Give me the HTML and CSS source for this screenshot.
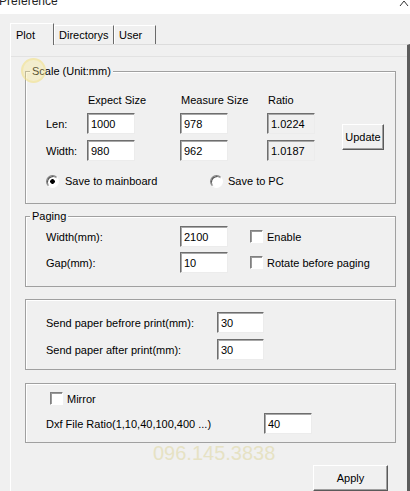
FILE: index.html
```html
<!DOCTYPE html>
<html lang="en">
<head>
    <meta charset="UTF-8">
    <meta name="viewport" content="width=device-width, initial-scale=1.0">
    <title>Preference</title>
    <link rel="stylesheet" href="styles.css">
</head>
<body>
    <!-- Title bar (cut off at the top) -->
    <div class="titlebar">
        <span class="title">Preference</span>
        <svg class="close-icon" width="10" height="6" viewBox="0 0 10 6">
            <path d="M1 6 L5 1 L9 6" fill="none" stroke="#333" stroke-width="1"/>
        </svg>
    </div>

    <!-- Tabs -->
    <div class="tabs">
        <div class="tab tab-plot active">Plot</div>
        <div class="tab tab-dir">Directorys</div>
        <div class="tab tab-user">User</div>
    </div>

    <div class="panel">
        <div class="panel-line"></div>

        <!-- Scale -->
        <div class="group scale">
            <div class="group-title">Scale (Unit:mm)</div>
            <div class="scale-grid">
                <span></span>
                <span class="col-head">Expect Size</span>
                <span class="col-head">Measure Size</span>
                <span class="col-head">Ratio</span>
                <span></span>

                <label for="lenExpect">Len:</label>
                <input class="field" id="lenExpect" type="text" value="1000">
                <input class="field" type="text" value="978">
                <input class="field readonly" type="text" value="1.0224" readonly>
                <button class="btn update-btn">Update</button>

                <label for="widthExpect">Width:</label>
                <input class="field" id="widthExpect" type="text" value="980">
                <input class="field" type="text" value="962">
                <input class="field readonly" type="text" value="1.0187" readonly>
            </div>
            <div class="save-row">
                <label class="option save-main"><input class="radio" type="radio" name="save" checked>Save to mainboard</label>
                <label class="option save-pc"><input class="radio" type="radio" name="save">Save to PC</label>
            </div>
        </div>

        <!-- Paging -->
        <div class="group paging">
            <div class="group-title">Paging</div>
            <div class="paging-grid">
                <span>Width(mm):</span>
                <input class="field" type="text" value="2100">
                <span></span>
                <label class="option"><input class="check" type="checkbox">Enable</label>

                <span>Gap(mm):</span>
                <input class="field" type="text" value="10">
                <span></span>
                <label class="option"><input class="check" type="checkbox">Rotate before paging</label>
            </div>
        </div>

        <!-- Send paper -->
        <div class="group feed">
            <div class="feed-grid">
                <span>Send paper befrore print(mm):</span>
                <input class="field" type="text" value="30">
                <span>Send paper after print(mm):</span>
                <input class="field" type="text" value="30">
            </div>
        </div>

        <!-- Mirror / Dxf -->
        <div class="group dxf">
            <label class="option mirror"><input class="check" type="checkbox">Mirror</label>
            <div class="dxf-row">
                <span>Dxf File Ratio(1,10,40,100,400 ...)</span>
                <input class="field" type="text" value="40">
            </div>
        </div>

        <div class="watermark">096.145.3838</div>

        <div class="apply-row">
            <button class="btn apply-btn">Apply</button>
        </div>
    </div>

    <div class="cursor-mark"></div>
</body>
</html>
```
FILE: styles.css
```css
/* CSS */
* {
    box-sizing: border-box;
}

body {
    margin: 0;
    height: 491px;
    overflow: hidden;
    font-family: "Liberation Sans", Arial, sans-serif;
    font-size: 11px;
    color: #000;
    background-color: #f0f0f0;
}

/* Title bar */
.titlebar {
    height: 14px;
    display: flex;
    justify-content: space-between;
    background-color: #fff;
    overflow: hidden;
}

.title {
    font-size: 12px;
    line-height: 14px;
    margin-top: -6px;
    margin-left: -1px;
    color: #222;
}

.close-icon {
    margin-right: 1px;
}

/* Tabs */
.tabs {
    height: 30px;
    display: flex;
    align-items: flex-end;
    padding-left: 10px;
}

.tab {
    height: 19px;
    padding: 2px 0 0 4px;
    line-height: 14px;
    border-top: 1px solid #fff;
    border-left: 1px solid #fff;
    border-right: 1px solid #6a6a6a;
}

.tab.active {
    height: 22px;
    padding-top: 4px;
    padding-left: 5px;
    margin-bottom: -1px;
    position: relative;
    z-index: 1;
    background-color: #f0f0f0;
}

.tab-plot {
    width: 44px;
}

.tab-dir {
    width: 60px;
}

.tab-user {
    width: 42px;
}

/* Panel */
.panel {
    margin-left: 10px;
    height: 447px;
    padding: 11px 11px 0 14px;
    border-top: 1px solid #dcdcdc;
    border-left: 1px solid #fff;
    border-right: 3px solid #5c5c5c;
}

.panel-line {
    border-top: 1px solid #e2e2e2;
    margin: 0 -11px 0 -14px;
}

/* Group boxes */
.group {
    position: relative;
    margin-top: 12px;
    padding-left: 20px;
    border: 1px solid #a0a0a0;
    box-shadow: inset 1px 1px #fff;
}

.group-title {
    position: absolute;
    top: -8px;
    left: 4px;
    padding: 0 2px;
    line-height: 14px;
    background-color: #f0f0f0;
}

/* Inputs */
.field {
    width: 48px;
    height: 21px;
    margin: 0;
    padding: 0 0 0 3px;
    font: inherit;
    color: #000;
    background-color: #fff;
    border: 1px solid;
    border-color: #6e6e6e #ececec #ececec #6e6e6e;
    box-shadow: inset 1px 1px #a8a8a8;
    outline: none;
}

.field.readonly {
    background-color: #f0f0f0;
}

.option {
    display: flex;
    align-items: center;
    gap: 4px;
    line-height: 14px;
}

.radio,
.check {
    appearance: none;
    margin: 0;
    width: 13px;
    height: 13px;
    border: 1px solid;
    border-color: #808080 #fff #fff #808080;
    box-shadow: inset 1px 1px #9a9a9a;
    background-color: #fff;
}

.radio {
    border-radius: 50%;
    box-shadow: inset 1px 1px #555;
}

.radio:checked {
    background: radial-gradient(circle, #000 0 2px, #fff 2.6px);
}

.btn {
    margin: 0;
    padding: 0;
    font: inherit;
    color: #000;
    background-color: #f0f0f0;
    border: 1px solid;
    border-color: #fff #5a5a5a #5a5a5a #fff;
    box-shadow: inset -1px -1px #a0a0a0;
}

/* Scale */
.scale {
    margin-top: 14px;
    padding-top: 20px;
    padding-bottom: 15px;
}

.scale-grid {
    display: grid;
    grid-template-columns: 41px 93px 87px 75px 42px;
    grid-template-rows: 15px 21px 21px;
    row-gap: 6px;
    align-items: center;
}

.col-head {
    padding-left: 1px;
}

.update-btn {
    grid-row: 2 / span 2;
    grid-column: 5;
    width: 42px;
    height: 26px;
}

.save-row {
    display: flex;
    margin-top: 13px;
    height: 14px;
    align-items: center;
}

.save-main {
    width: 164px;
    gap: 6px;
}

.save-pc {
    gap: 5px;
}

/* Paging */
.paging {
    padding-top: 9px;
    padding-bottom: 13px;
}

.paging-grid {
    display: grid;
    grid-template-columns: 134px 48px 22px auto;
    grid-template-rows: 21px 21px;
    row-gap: 5px;
    align-items: center;
}

/* Send paper */
.feed {
    padding-top: 12px;
    padding-bottom: 9px;
}

.feed-grid {
    display: grid;
    grid-template-columns: 171px 47px;
    grid-template-rows: 21px 21px;
    row-gap: 6px;
    align-items: center;
}

.feed-grid .field {
    width: 47px;
}

/* Mirror / Dxf */
.dxf {
    margin-top: 13px;
    padding-top: 8px;
    padding-bottom: 8px;
}

.mirror {
    height: 13px;
    margin-left: 4px;
}

.dxf-row {
    display: grid;
    grid-template-columns: 218px 48px;
    align-items: center;
    margin-top: 8px;
}

/* Bottom */
.watermark {
    margin-left: 128px;
    font-size: 20px;
    line-height: 20px;
    color: #e6e2c4;
}

.apply-row {
    display: flex;
    justify-content: flex-end;
    margin-top: 2px;
    padding-right: 8px;
}

.apply-btn {
    width: 75px;
    height: 26px;
}

/* Cursor highlight over the Scale box */
.cursor-mark {
    position: absolute;
    left: 21px;
    top: 58px;
    width: 25px;
    height: 25px;
    border-radius: 50%;
    background-color: rgba(250, 232, 140, 0.35);
    border: 2px solid rgba(240, 220, 120, 0.35);
}
```
